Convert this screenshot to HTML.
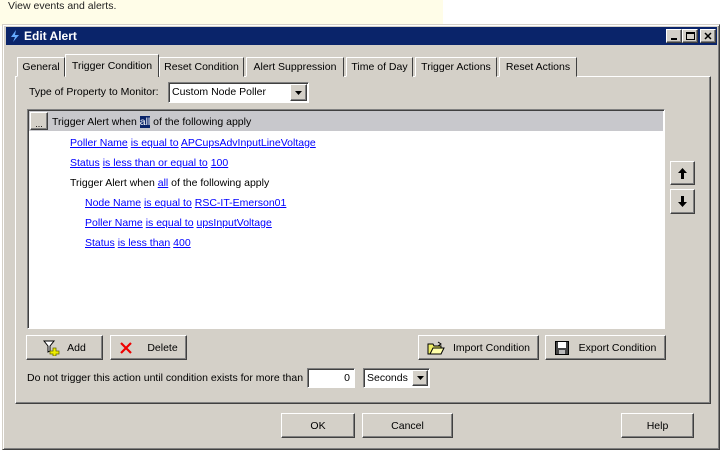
<!DOCTYPE html>
<html><head><style>
*{box-sizing:border-box;margin:0;padding:0}
body{width:722px;height:464px;background:#fff;font-family:"Liberation Sans",sans-serif;font-size:10.5px;color:#000;position:relative;overflow:hidden}
.abs{position:absolute}
.btn{position:absolute;background:#d4d0c8;border:1px solid;border-color:#fff #404040 #404040 #fff;box-shadow:inset -1px -1px 0 #808080;display:flex;align-items:center;justify-content:center;font-size:10.5px}
.sunk{border:1px solid;border-color:#808080 #fff #fff #808080;box-shadow:inset 1px 1px 0 #404040}
a{color:#0000ff;text-decoration:underline}
.row{position:absolute;white-space:nowrap;font-size:10.5px}
.tab{position:absolute;top:57px;height:20px;border:1px solid;border-color:#fff #404040 transparent #fff;padding:3px 0;text-align:center;background:#d4d0c8;white-space:nowrap;font-size:10.5px}
</style></head><body>
<div class="abs" style="left:0;top:0;width:443px;height:26px;background:#fffde8"></div>
<div class="row" style="left:8px;top:0px;color:#222">View events and alerts.</div>
<div class="abs" style="left:2px;top:24px;width:718px;height:426px;background:#d4d0c8;border:1px solid;border-color:#d4d0c8 #404040 #404040 #d4d0c8;box-shadow:inset 1px 1px 0 #fff,inset -1px -1px 0 #808080"></div>
<div class="abs" style="left:6px;top:27px;width:711px;height:18px;background:#0a246a"></div>
<svg class="abs" style="left:9px;top:30px" width="12" height="12"><path d="M7 0L2 7h4L4 12l6-7H6z" fill="#6af"/></svg>
<div class="abs" style="left:24px;top:29px;color:#fff;font-weight:bold;font-size:12px">Edit Alert</div>
<div class="btn" style="left:666px;top:29px;width:16px;height:14px"><div style="width:6px;height:2px;background:#000;margin-top:6px"></div></div>
<div class="btn" style="left:682px;top:29px;width:16px;height:14px"><div style="width:9px;height:8px;border:1px solid #000;border-top-width:2px"></div></div>
<div class="btn" style="left:700px;top:29px;width:16px;height:14px;font-weight:bold;font-size:11px">✕</div>
<div class="abs" style="left:15px;top:76px;width:696px;height:328px;border:1px solid;border-color:#fff #404040 #404040 #fff;box-shadow:inset -1px -1px 0 #808080"></div>
<div class="tab" style="left:17px;width:48px">General</div>
<div class="tab" style="left:159px;width:85px">Reset Condition</div>
<div class="tab" style="left:246px;width:98px">Alert Suppression</div>
<div class="tab" style="left:346px;width:67px">Time of Day</div>
<div class="tab" style="left:415px;width:82px">Trigger Actions</div>
<div class="tab" style="left:499px;width:78px">Reset Actions</div>
<div class="tab" style="left:65px;top:54px;height:23px;width:94px;border-bottom:none;padding-top:5px">Trigger Condition</div>
<div class="row" style="left:29px;top:86px">Type of Property to Monitor:</div>
<div class="abs sunk" style="left:168px;top:82px;width:141px;height:21px;background:#fff"></div>
<div class="row" style="left:172px;top:86px">Custom Node Poller</div>
<div class="btn" style="left:290px;top:84px;width:17px;height:17px"><svg width="7" height="4"><path d="M0 0h7L3.5 4z"/></svg></div>
<div class="abs sunk" style="left:27px;top:109px;width:638px;height:220px;background:#fff"></div>
<div class="abs" style="left:29px;top:111px;width:634px;height:20px;background:#c8c8cc"></div>
<div class="btn" style="left:30px;top:112px;width:18px;height:18px;font-size:9px;align-items:flex-end">...</div>
<div class="row" style="left:52px;top:116px">Trigger Alert when <span style="background:#0a246a;color:#fff">all</span> of the following apply</div>
<div class="row" style="left:70px;top:137px"><a>Poller Name</a> <a>is equal to</a> <a>APCupsAdvInputLineVoltage</a></div>
<div class="row" style="left:70px;top:157px"><a>Status</a> <a>is less than or equal to</a> <a>100</a></div>
<div class="row" style="left:70px;top:177px">Trigger Alert when <a>all</a> of the following apply</div>
<div class="row" style="left:85px;top:197px"><a>Node Name</a> <a>is equal to</a> <a>RSC-IT-Emerson01</a></div>
<div class="row" style="left:85px;top:217px"><a>Poller Name</a> <a>is equal to</a> <a>upsInputVoltage</a></div>
<div class="row" style="left:85px;top:237px"><a>Status</a> <a>is less than</a> <a>400</a></div>
<div class="btn" style="left:670px;top:161px;width:25px;height:24px"><svg width="9" height="11"><path d="M4.5 0L0 5h3v6h3V5h3z"/></svg></div>
<div class="btn" style="left:670px;top:189px;width:25px;height:25px"><svg width="9" height="11"><path d="M4.5 11L0 6h3V0h3v6h3z"/></svg></div>
<div class="btn" style="left:26px;top:335px;width:77px;height:25px"><svg width="18" height="16" style="margin-right:6px"><path d="M1 1h10L7 6v5L5 12V6z" fill="#fff" stroke="#000"/><path d="M10 8h3v3h3v3h-3v2h-3v-2H7v-3h3z" fill="#ee0" stroke="#660" stroke-width=".8"/></svg>Add</div>
<div class="btn" style="left:110px;top:335px;width:77px;height:25px"><svg width="14" height="14" style="margin-right:14px"><path d="M2 2L12 12M12 2L2 12" stroke="#e00" stroke-width="2.2"/></svg>Delete</div>
<div class="btn" style="left:418px;top:335px;width:121px;height:25px"><svg width="18" height="14" style="margin-right:8px"><path d="M1 3h5l1 2h7v8H1z" fill="#ee6" stroke="#000"/><path d="M3 13l3-6h11l-3 6z" fill="#ffa" stroke="#000"/><path d="M11 1l3 2-3 2" fill="none" stroke="#000"/></svg>Import Condition</div>
<div class="btn" style="left:545px;top:335px;width:121px;height:25px"><svg width="14" height="14" style="margin-right:10px"><rect x=".5" y=".5" width="13" height="13" fill="#444" stroke="#000"/><rect x="3" y="1" width="8" height="6" fill="#fff"/><rect x="4" y="9" width="6" height="4" fill="#bbb"/></svg>Export Condition</div>
<div class="row" style="left:27px;top:372px">Do not trigger this action until condition exists for more than</div>
<div class="abs sunk" style="left:307px;top:368px;width:48px;height:20px;background:#fff;text-align:right;padding:3px 4px">0</div>
<div class="abs sunk" style="left:363px;top:368px;width:67px;height:20px;background:#fff;padding:3px 3px">Seconds</div>
<div class="btn" style="left:412px;top:370px;width:16px;height:16px"><svg width="7" height="4"><path d="M0 0h7L3.5 4z"/></svg></div>
<div class="btn" style="left:281px;top:413px;width:74px;height:25px">OK</div>
<div class="btn" style="left:362px;top:413px;width:91px;height:25px">Cancel</div>
<div class="btn" style="left:621px;top:413px;width:73px;height:25px">Help</div>
</body></html>
